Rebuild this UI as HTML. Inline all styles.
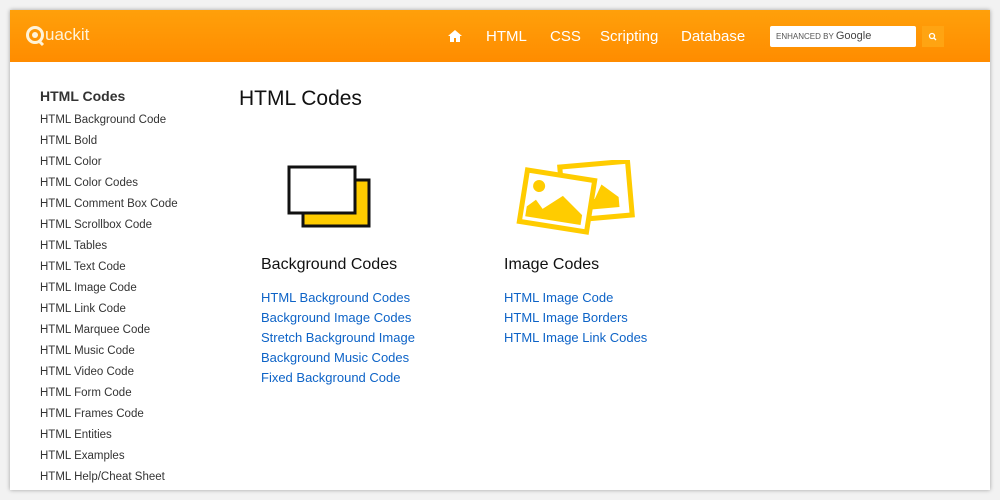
<!DOCTYPE html>
<html><head><style>
body{margin:0;width:1000px;height:500px;background:#f2f2f2;font-family:"Liberation Sans",sans-serif;overflow:hidden;position:relative}
.card{position:absolute;left:10px;top:10px;width:980px;height:480px;background:#fff;box-shadow:0 0 4px rgba(0,0,0,.35);overflow:hidden}
.hd{position:absolute;left:0;top:0;width:980px;height:52px;background:linear-gradient(#ffa00a,#ff8c00)}
.logo{position:absolute;top:15px;color:#fff3d8;font-size:17px}
.nav{position:absolute;top:18px;color:#fff;font-size:15px}
.s{position:absolute;left:760px;top:16px;width:146px;height:21px;background:#fff;border-radius:2px;font-size:8px;color:#555;line-height:21px;padding-left:6px;box-sizing:border-box}
.s b{font-size:11px;color:#444;font-weight:normal}
.sb{position:absolute;left:912px;top:16px;width:22px;height:21px;background:#ffa412}
.side{position:absolute;left:30px;top:78px;font-size:11.5px;color:#333}
.side div{height:21px}
.side .t{font-size:14px;font-weight:bold;height:26px}
h1{position:absolute;left:229px;top:77px;margin:0;font-size:21px;font-weight:normal;color:#111}
.col{position:absolute;top:246px}
.col h2{margin:0 0 16px;font-size:16px;font-weight:normal;color:#111}
.col a{display:block;color:#0d63c7;font-size:13px;height:20px;text-decoration:none}
</style></head><body>
<div class="card">
<div class="hd">
<svg style="position:absolute;left:15px;top:14px" width="24" height="26"><circle cx="10" cy="11" r="7.5" fill="none" stroke="#fff3d8" stroke-width="3"/><circle cx="10" cy="11" r="3" fill="#fff3d8"/><path d="M14 17l4 4" stroke="#fff3d8" stroke-width="3"/></svg>
<span class="logo" style="left:35px">uackit</span>
<svg style="position:absolute;left:438px;top:20px" width="14" height="12"><path d="M7 0L0 6h2v6h4V8h2v4h4V6h2z" fill="#fff"/></svg>
<span class="nav" style="left:476px">HTML</span>
<span class="nav" style="left:540px">CSS</span>
<span class="nav" style="left:590px">Scripting</span>
<span class="nav" style="left:671px">Database</span>
<div class="s">ENHANCED BY <b>Google</b></div>
<div class="sb"><svg width="22" height="21"><circle cx="10" cy="10" r="2.5" fill="none" stroke="#fff" stroke-width="1.3"/><path d="M12 12l2 2" stroke="#fff" stroke-width="1.3"/></svg></div>
</div>
<div class="side">
<div class="t">HTML Codes</div>
<div>HTML Background Code</div><div>HTML Bold</div><div>HTML Color</div><div>HTML Color Codes</div><div>HTML Comment Box Code</div><div>HTML Scrollbox Code</div><div>HTML Tables</div><div>HTML Text Code</div><div>HTML Image Code</div><div>HTML Link Code</div><div>HTML Marquee Code</div><div>HTML Music Code</div><div>HTML Video Code</div><div>HTML Form Code</div><div>HTML Frames Code</div><div>HTML Entities</div><div>HTML Examples</div><div>HTML Help/Cheat Sheet</div>
</div>
<h1>HTML Codes</h1>
<svg style="position:absolute;left:270px;top:150px" width="400" height="90">
<rect x="23" y="20" width="66" height="46" fill="#ffcc00" stroke="#111" stroke-width="3"/>
<rect x="9" y="7" width="66" height="46" fill="#fff" stroke="#111" stroke-width="3"/>
<g transform="translate(-10,-9)">
<g transform="rotate(-5 326 40)"><rect x="292" y="13" width="68" height="54" fill="#fff" stroke="#ffcc00" stroke-width="5"/><path d="M300 58l14-20 10 10 8-14 16 14v10z" fill="#ffcc00"/></g>
<g transform="rotate(9 287 50)"><rect x="253" y="24" width="68" height="52" fill="#fff" stroke="#ffcc00" stroke-width="5"/><circle cx="267" cy="38" r="6" fill="#ffcc00"/><path d="M258 70v-10l8-8 8 8 18-16 22 16v10z" fill="#ffcc00"/></g>
</g>
</svg>
<div class="col" style="left:251px"><h2>Background Codes</h2><a>HTML Background Codes</a><a>Background Image Codes</a><a>Stretch Background Image</a><a>Background Music Codes</a><a>Fixed Background Code</a></div>
<div class="col" style="left:494px"><h2>Image Codes</h2><a>HTML Image Code</a><a>HTML Image Borders</a><a>HTML Image Link Codes</a></div>
</div>
</body></html>
